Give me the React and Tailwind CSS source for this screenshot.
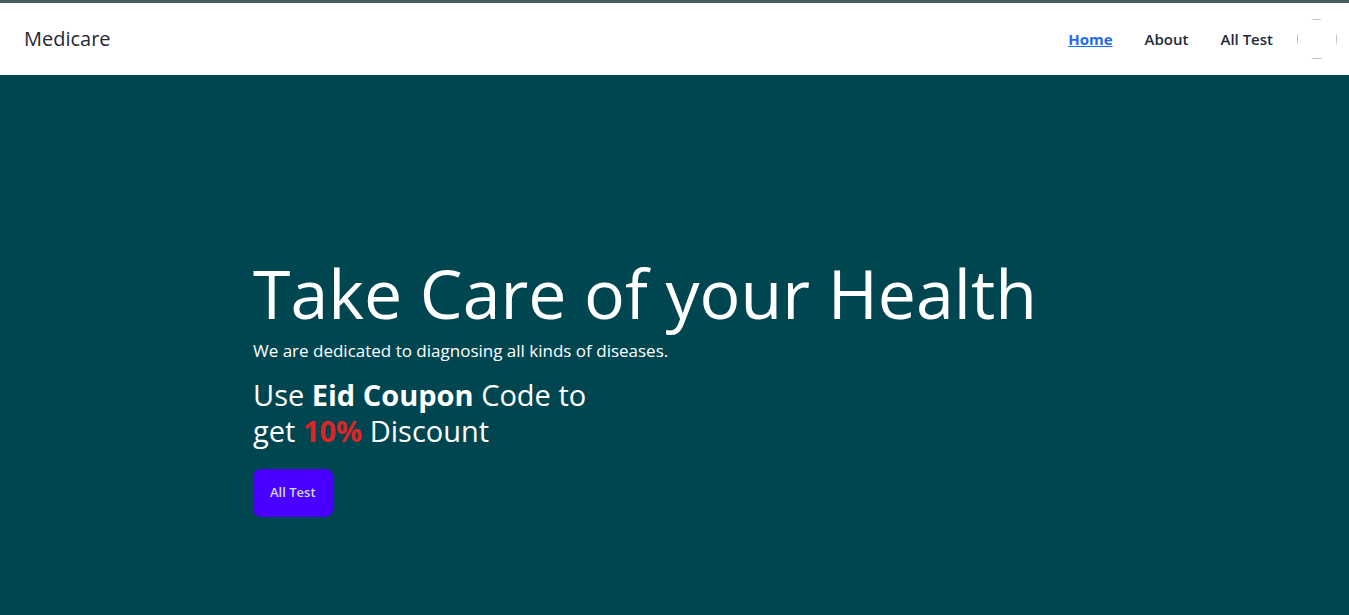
function Navbar() {
  return (
    <header className="flex items-center justify-between border-t-[3px] border-[#465a62] bg-white px-3 py-4 text-[#1f2937]">
      <a href="#home" className="px-3 text-[20px] leading-7">
        Medicare
      </a>
      <nav className="flex items-center" aria-label="Main">
        <ul className="mr-6 flex items-center gap-8 text-[15px] leading-5 font-semibold">
          <li>
            <a href="#home" aria-current="page" className="font-bold text-[#1d6bf0] underline">
              Home
            </a>
          </li>
          <li>
            <a href="#about">About</a>
          </li>
          <li>
            <a href="#tests">All Test</a>
          </li>
        </ul>
        <button type="button" aria-label="Account" className="size-10 overflow-hidden rounded-full">
          <span className="block size-10 border border-[#b8b8b8]" />
        </button>
      </nav>
    </header>
  );
}

function Hero() {
  return (
    <main className="flex grow items-center bg-[#004651] px-6 text-white">
      <section className="mx-auto w-full max-w-[843px] pt-27 pb-6">
        <h1 className="text-[68px] leading-[72px]">Take Care of your Health</h1>
        <p className="mt-2 text-[17px] leading-7">
          We are dedicated to diagnosing all kinds of diseases.
        </p>
        <p className="mt-3 text-[29px] leading-9">
          Use <strong>Eid Coupon</strong> Code to
          <br />
          get <strong className="text-[#dc2626]">10%</strong> Discount
        </p>
        <button
          type="button"
          className="mt-5 h-12 rounded-lg bg-[#4a00ff] px-[17px] text-[13px] font-semibold text-[#d1dbff]"
        >
          All Test
        </button>
      </section>
    </main>
  );
}

export default function App() {
  return (
    <div className="flex min-h-screen flex-col font-['Open_Sans',sans-serif]">
      <Navbar />
      <Hero />
    </div>
  );
}
